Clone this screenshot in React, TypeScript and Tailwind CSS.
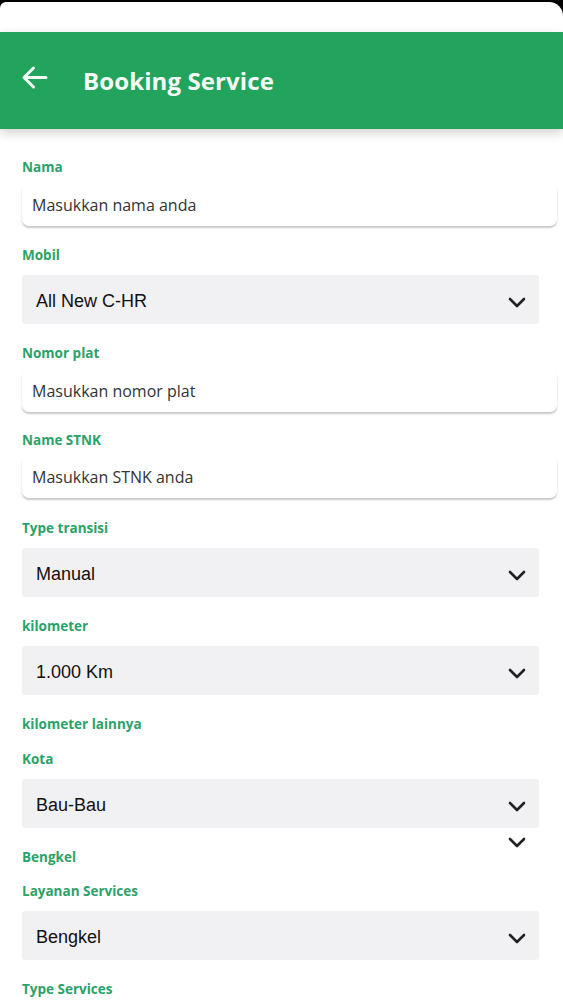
import React from "react";

const Chevron = () => (
  <svg width="18" height="11" viewBox="0 0 18 11" fill="none">
    <path d="M2 2 L9 9 L16 2" stroke="#222" strokeWidth="2.6" strokeLinecap="round" strokeLinejoin="round" />
  </svg>
);

const Label = ({ children, className = "" }: { children: React.ReactNode; className?: string }) => (
  <div
    className={`text-[13.5px] font-bold leading-[20px] text-[#2ba268] ${className}`}
    style={{ fontFamily: '"Open Sans", sans-serif' }}
  >
    {children}
  </div>
);

const Input = ({ placeholder, className = "" }: { placeholder: string; className?: string }) => (
  <div
    className={`h-[42px] rounded-[7px] bg-white shadow-[0_2px_2px_rgba(0,0,0,0.22)] flex items-center pl-[10px] text-[16px] text-[#333] ${className}`}
    style={{ fontFamily: '"Open Sans", sans-serif' }}
  >
    {placeholder}
  </div>
);

const Select = ({ value, className = "" }: { value: string; className?: string }) => (
  <div
    className={`mr-[18px] h-[49px] rounded-[3px] bg-[#f1f0f3] flex items-center justify-between pl-[14px] pr-[13px] text-[18px] text-[#111] ${className}`}
    style={{ fontFamily: '"Liberation Sans", Arial, sans-serif' }}
  >
    <span className="pt-[3px]">{value}</span>
    <span className="mt-[5px] flex">
      <Chevron />
    </span>
  </div>
);

export default function App() {
  return (
    <div className="w-full min-h-screen bg-white overflow-hidden">
      <div className="bg-black pt-[2px]">
        <div className="h-[30px] bg-white rounded-tl-[6px] rounded-tr-[14px]" />
      </div>
      <div className="relative z-10 h-[97px] bg-[#22a45d] flex items-center shadow-[0_4px_10px_rgba(0,0,0,0.18)]">
        <div className="pl-[21px] mb-[7px] flex">
          <svg width="27" height="25" viewBox="0 0 27 25" fill="none">
            <path d="M25 12.5 H3.5 M12.5 3 L3 12.5 L12.5 22" stroke="#f2fbf5" strokeWidth="3" strokeLinecap="round" strokeLinejoin="round" />
          </svg>
        </div>
        <div
          className="ml-[35px] text-[24px] font-bold text-[#f4fbf6] tracking-[0.1px]"
          style={{ fontFamily: '"Open Sans", sans-serif' }}
        >
          Booking Service
        </div>
      </div>

      <div className="pl-[22px] pr-[6px] flex flex-col">
        <Label className="mt-[28px]">Nama</Label>
        <Input className="mt-[7px]" placeholder="Masukkan nama anda" />

        <Label className="mt-[19px]">Mobil</Label>
        <Select className="mt-[10px]" value="All New C-HR" />

        <Label className="mt-[19px]">Nomor plat</Label>
        <Input className="mt-[7px]" placeholder="Masukkan nomor plat" />

        <Label className="mt-[18px]">Name STNK</Label>
        <Input className="mt-[6px]" placeholder="Masukkan STNK anda" />

        <Label className="mt-[20px]">Type transisi</Label>
        <Select className="mt-[10px]" value="Manual" />

        <Label className="mt-[19px]">kilometer</Label>
        <Select className="mt-[10px]" value="1.000 Km" />

        <Label className="mt-[19px]">kilometer lainnya</Label>

        <Label className="mt-[15px]">Kota</Label>
        <Select className="mt-[10px]" value="Bau-Bau" />

        <div className="relative mt-[19px]">
          <div className="absolute right-[31px] top-[-10px] flex">
            <Chevron />
          </div>
          <Label>Bengkel</Label>
        </div>

        <Label className="mt-[14px]">Layanan Services</Label>
        <Select className="mt-[10px]" value="Bengkel" />

        <Label className="mt-[19px]">Type Services</Label>
        <div className="h-[40px]" />
      </div>
    </div>
  );
}
